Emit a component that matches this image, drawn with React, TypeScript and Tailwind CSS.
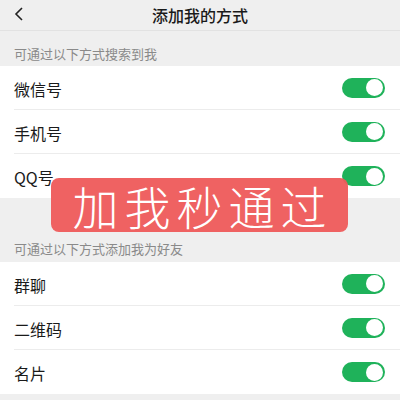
const font = { fontFamily: '"Noto Sans CJK SC", "Noto Sans", sans-serif' };

function Toggle() {
  return (
    <div className="flex h-[20px] w-[43px] items-center justify-end rounded-full bg-[#1fb25a] pr-[2px]">
      <div className="h-[17px] w-[17px] rounded-full bg-white" />
    </div>
  );
}

function Row({ label, last }: { label: string; last?: boolean }) {
  return (
    <div className="flex h-[44px] pl-[14px]">
      <div
        className={
          "flex flex-1 items-center justify-between pr-[15px] " +
          (last ? "" : "border-b border-[#ececec]")
        }
      >
        <span className="pt-[2px] text-[16px] text-[#1a1a1a]">{label}</span>
        <Toggle />
      </div>
    </div>
  );
}

export default function App() {
  return (
    <div className="relative h-[400px] w-[400px] overflow-hidden bg-[#efefef]" style={font}>
      <div className="relative flex h-[31px] items-center justify-center border-b border-[#e2e2e2]">
        <svg className="absolute left-[13px] top-[6px]" width="12" height="16" viewBox="0 0 12 16">
          <path d="M9 2 L3 8 L9 14" fill="none" stroke="#222" strokeWidth="1.6" />
        </svg>
        <span className="text-[16px] font-medium text-[#1a1a1a]">添加我的方式</span>
      </div>
      <div className="flex h-[35px] items-end pb-[4px] pl-[14px] text-[13px] leading-[16px] text-[#8a8a8a]">
        可通过以下方式搜索到我
      </div>
      <div className="bg-white">
        <Row label="微信号" />
        <Row label="手机号" />
        <Row label="QQ号" last />
      </div>
      <div className="flex h-[64px] items-end pb-[5px] pl-[14px] text-[13px] leading-[16px] text-[#8a8a8a]">
        可通过以下方式添加我为好友
      </div>
      <div className="bg-white">
        <Row label="群聊" />
        <Row label="二维码" />
        <Row label="名片" last />
      </div>
      <div className="absolute left-[51px] top-[178px] flex h-[54px] w-[297px] items-center justify-center rounded-[8px] bg-[#ee5a5a]/95">
        <span
          className="pl-[6px] text-[46px] leading-none tracking-[6px] text-white"
          style={{ fontFamily: '"Noto Sans CJK SC", sans-serif', fontWeight: 300 }}
        >
          加我秒通过
        </span>
      </div>
    </div>
  );
}
